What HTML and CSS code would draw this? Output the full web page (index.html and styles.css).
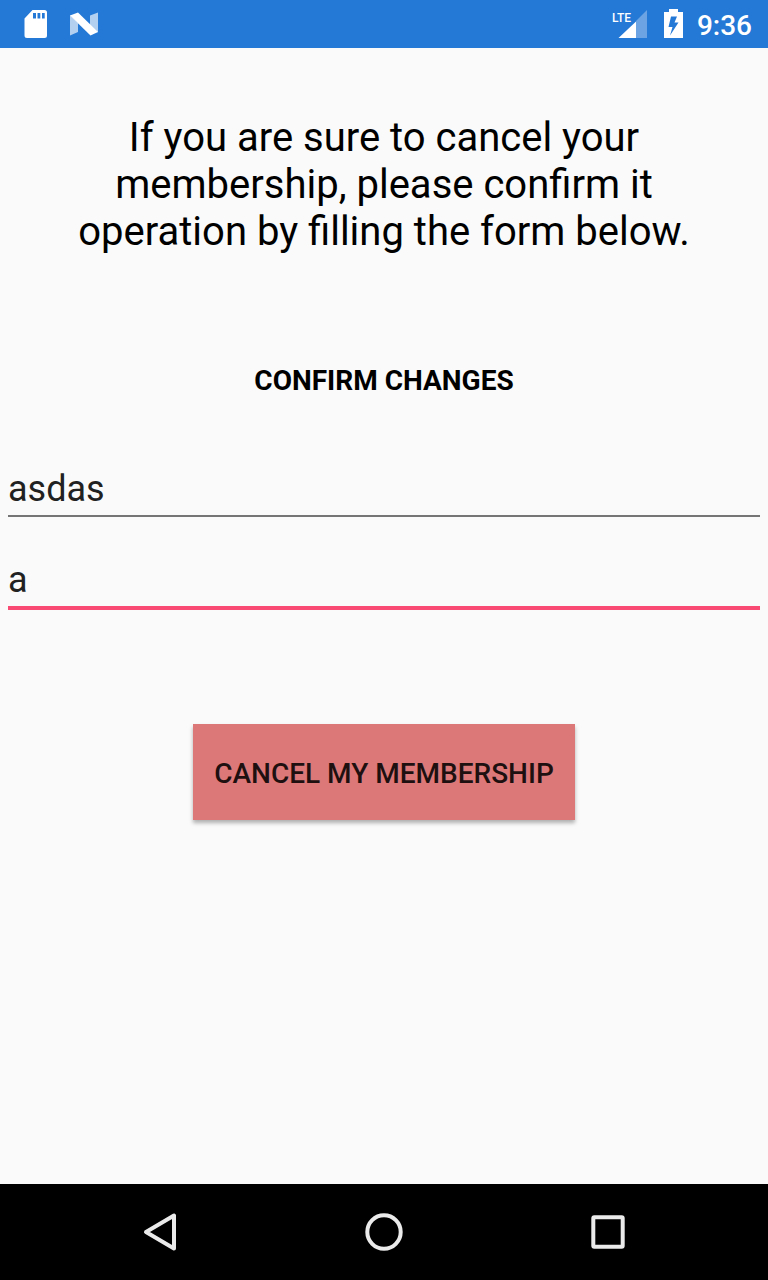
FILE: index.html
```html
<!DOCTYPE html>
<html lang="en">
<head>
<meta charset="utf-8">
<meta name="viewport" content="width=device-width, initial-scale=1">
<title>Cancel membership</title>
<link rel="stylesheet" href="styles.css">
</head>
<body>
<header class="status-bar">
  <div class="status-group status-notifications">
    <svg width="24" height="28" viewBox="0 0 24 28" aria-hidden="true">
      <path fill="#fff" fill-rule="evenodd" d="M8.500 0H20.500Q23 0 23 2.500V25.500Q23 28 20.500 28H3Q.5 28 .5 25.500V8.500ZM9 3V8.500H12V3ZM13.500 3V8.500H16.300V3ZM18 3V8.500H20.700V3Z"/>
    </svg>
    <svg width="28" height="24" viewBox="0 0 28 24" aria-hidden="true">
      <path fill="#b3d0f1" d="M0 3L8 11V20L0 23.500ZM28 .5V20.500L20 13V3.500Z"/>
      <path fill="#fff" d="M0 3.500L8 .5 28 20 20.500 23.500Z"/>
    </svg>
  </div>
  <div class="status-group status-system">
    <svg width="36" height="30" viewBox="0 0 36 30" role="img" aria-label="LTE signal">
      <path fill="#6ba3e3" d="M35 1V29H24V12Z"/>
      <path fill="#fff" d="M24 12.500V29H6.500Z"/>
      <text class="network-label" x="0" y="13">LTE</text>
    </svg>
    <svg class="battery-icon" width="20" height="30" viewBox="0 0 20 30" role="img" aria-label="Battery charging">
      <path fill="#fff" fill-rule="evenodd" d="M5 0H14V3H19V29H0V3H5ZM7 7.500L4.500 18H8.500L6 26.500 14.500 13.500H10.500L13 7.500Z"/>
    </svg>
    <time class="clock">9:36</time>
  </div>
</header>
<main class="content">
  <p class="message">If you are sure to cancel your membership, please confirm it operation by filling the form below.</p>
  <form class="confirm-form">
    <h1 class="form-title">CONFIRM CHANGES</h1>
    <input class="field" type="text" aria-label="User name" value="asdas">
    <input class="field field-active" type="text" aria-label="Confirmation" value="a">
    <button class="cancel-button" type="button">CANCEL MY MEMBERSHIP</button>
  </form>
</main>
<nav class="nav-bar">
  <button class="nav-button" type="button" aria-label="Back">
    <svg width="40" height="40" viewBox="0 0 40 40"><path fill="none" stroke="#ebebeb" stroke-width="4" stroke-linejoin="round" d="M6 20L34 3.500V36.500Z"/></svg>
  </button>
  <button class="nav-button" type="button" aria-label="Home">
    <svg width="40" height="40" viewBox="0 0 40 40"><circle cx="20" cy="20" r="16.700" fill="none" stroke="#ebebeb" stroke-width="4"/></svg>
  </button>
  <button class="nav-button" type="button" aria-label="Recent apps">
    <svg width="40" height="40" viewBox="0 0 40 40"><rect x="5.300" y="5.300" width="29.400" height="29.400" rx="1" fill="none" stroke="#ebebeb" stroke-width="4"/></svg>
  </button>
</nav>
</body>
</html>
```

FILE: styles.css
```css
* {
  box-sizing: border-box;
}

body {
  margin: 0;
  min-height: 100vh;
  display: flex;
  flex-direction: column;
  background: #fafafa;
  color: #000;
  font-family: Roboto, "Liberation Sans", sans-serif;
}

svg {
  display: block;
}

.status-bar {
  display: flex;
  align-items: center;
  justify-content: space-between;
  height: 48px;
  padding: 0 16px 0 24px;
  background: #2478d6;
  color: #fff;
}

.status-group {
  display: flex;
  align-items: center;
}

.status-notifications {
  gap: 22px;
}

.network-label {
  fill: #fff;
  font-size: 12px;
  font-weight: 500;
}

.battery-icon {
  margin: 0 13px 0 16px;
}

.clock {
  padding-top: 4px;
  font-size: 28px;
  font-weight: 500;
  line-height: 32px;
}

.content {
  flex: 1;
  padding: 66px 8px 32px;
}

.message {
  margin: 0;
  padding: 0 56px;
  font-size: 40px;
  line-height: 47px;
  text-align: center;
}

.confirm-form {
  display: flex;
  flex-direction: column;
  padding-top: 109px;
}

.form-title {
  margin: 0 0 71px;
  font-size: 28px;
  font-weight: 700;
  line-height: 33px;
  text-align: center;
}

.field {
  width: 100%;
  height: 49px;
  margin: 0 0 42px;
  padding: 0 0 5px;
  border: 0;
  border-bottom: 2px solid #757575;
  border-radius: 0;
  outline: 0;
  background: transparent;
  color: #212121;
  font-family: inherit;
  font-size: 36px;
  line-height: 42px;
}

.field-active {
  height: 51px;
  margin-bottom: 114px;
  border-bottom: 4px solid #f94a74;
}

.cancel-button {
  align-self: center;
  min-height: 96px;
  padding: 2px 21px 0;
  border: 0;
  background: #dd7878;
  box-shadow: 0 3px 4px rgba(0, 0, 0, 0.3);
  color: #1e1010;
  font-family: inherit;
  font-size: 28px;
  font-weight: 500;
  line-height: 33px;
}

.nav-bar {
  display: flex;
  align-items: center;
  justify-content: center;
  height: 96px;
  background: #000;
}

.nav-button {
  display: flex;
  align-items: center;
  justify-content: center;
  flex: 0 1 224px;
  height: 96px;
  padding: 0;
  border: 0;
  background: transparent;
}
```
